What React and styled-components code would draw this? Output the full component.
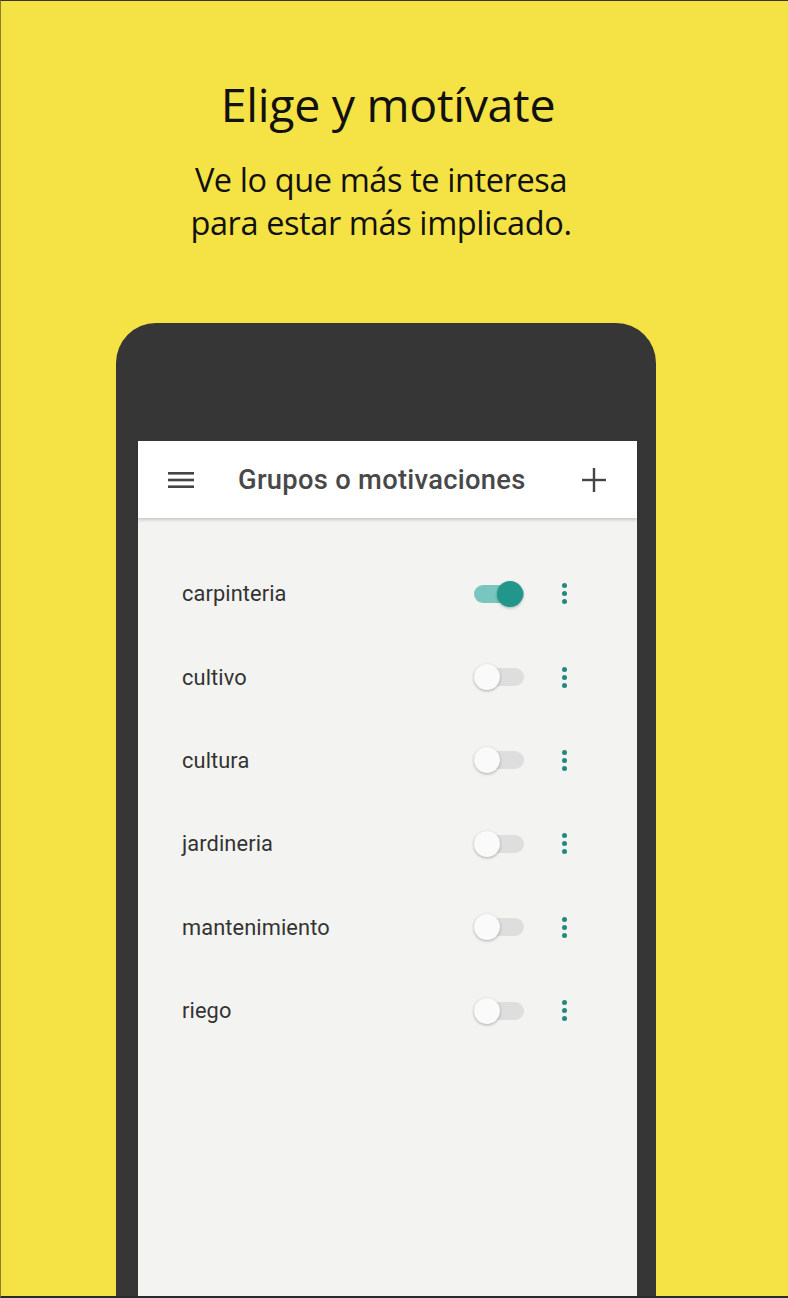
import React from "react";
import styled, { createGlobalStyle } from "styled-components";

const Global = createGlobalStyle`
  html, body { margin: 0; padding: 0; }
  body { background: #f5e345; }
`;

const Page = styled.div`
  width: 788px;
  height: 1298px;
  box-sizing: border-box;
  background: #f5e345;
  border-top: 1px solid #3a3520;
  border-left: 1px solid #8a7f2a;
  border-bottom: 2px solid #2a2a2a;
  overflow: hidden;
  display: flex;
  flex-direction: column;
`;

const Hero = styled.header`
  display: flex;
  flex-direction: column;
  align-items: center;
  padding: 72px 13px 0 0;
  color: #111;
  font-family: "Open Sans", "Liberation Sans", sans-serif;
`;

const Title = styled.h1`
  margin: 0;
  font-size: 46.5px;
  font-weight: 400;
  line-height: 62px;
  letter-spacing: -0.3px;
`;

const Subtitle = styled.p`
  margin: 23px 14px 0 0;
  font-size: 32.5px;
  line-height: 43px;
  text-align: center;
  letter-spacing: -0.4px;
`;

const Phone = styled.div`
  margin: 79px 0 0 115px;
  width: 540px;
  flex: 1;
  box-sizing: border-box;
  background: #363636;
  border-radius: 40px 40px 0 0;
  padding: 118px 19px 0 22px;
  display: flex;
`;

const Screen = styled.div`
  flex: 1;
  background: #f3f3f1;
  display: flex;
  flex-direction: column;
  font-family: Roboto, "Noto Sans", sans-serif;
`;

const Toolbar = styled.div`
  height: 77px;
  background: #fff;
  display: flex;
  align-items: center;
  padding: 0 30px 0 30px;
  box-shadow: 0 2px 3px rgba(0, 0, 0, 0.18);
  position: relative;
  z-index: 1;
`;

const ToolbarTitle = styled.div`
  flex: 1;
  margin-left: 44px;
  font-size: 27.3px;
  font-weight: 500;
  color: #484848;
  letter-spacing: 0.3px;
`;

const IconBox = styled.div`
  width: 26px;
  height: 26px;
  display: flex;
  align-items: center;
  justify-content: center;
`;

const List = styled.div`
  display: flex;
  flex-direction: column;
  padding-top: 34px;
`;

const Row = styled.div`
  height: 83.4px;
  display: flex;
  align-items: center;
  padding-left: 44px;
`;

const Label = styled.div`
  width: 292px;
  font-size: 21.8px;
  color: #333;
  letter-spacing: 0.1px;
`;

const Switch = styled.div`
  position: relative;
  width: 50px;
  height: 18px;
  border-radius: 9px;
  background: ${(p) => (p.$on ? "#78c6bf" : "#dedede")};
`;

const Thumb = styled.div`
  position: absolute;
  top: -4px;
  left: ${(p) => (p.$on ? "23px" : "0px")};
  width: 26px;
  height: 26px;
  border-radius: 50%;
  background: ${(p) => (p.$on ? "#21968a" : "#fafafa")};
  box-shadow: 0 1px 3px rgba(0, 0, 0, 0.3);
`;

const Kebab = styled.div`
  margin-left: 38px;
  display: flex;
  flex-direction: column;
  gap: 3px;
  & > span {
    width: 5px;
    height: 5px;
    border-radius: 50%;
    background: #23897e;
  }
`;

const items = [
  { name: "carpinteria", on: true },
  { name: "cultivo" },
  { name: "cultura" },
  { name: "jardineria" },
  { name: "mantenimiento" },
  { name: "riego" },
];

export default function App() {
  return (
    <>
      <Global />
      <Page>
        <Hero>
          <Title>Elige y motívate</Title>
          <Subtitle>
            Ve lo que más te interesa
            <br />
            para estar más implicado.
          </Subtitle>
        </Hero>
        <Phone>
          <Screen>
            <Toolbar>
              <IconBox>
                <svg width="26" height="18" viewBox="0 0 26 18">
                  <rect x="0" y="1" width="26" height="2.6" fill="#444" />
                  <rect x="0" y="7.7" width="26" height="2.6" fill="#444" />
                  <rect x="0" y="14.4" width="26" height="2.6" fill="#444" />
                </svg>
              </IconBox>
              <ToolbarTitle>Grupos o motivaciones</ToolbarTitle>
              <IconBox>
                <svg width="26" height="26" viewBox="0 0 26 26">
                  <rect x="11.8" y="1" width="2.4" height="24" fill="#444" />
                  <rect x="1" y="11.8" width="24" height="2.4" fill="#444" />
                </svg>
              </IconBox>
            </Toolbar>
            <List>
              {items.map((it) => (
                <Row key={it.name}>
                  <Label>{it.name}</Label>
                  <Switch $on={it.on}>
                    <Thumb $on={it.on} />
                  </Switch>
                  <Kebab>
                    <span />
                    <span />
                    <span />
                  </Kebab>
                </Row>
              ))}
            </List>
          </Screen>
        </Phone>
      </Page>
    </>
  );
}
